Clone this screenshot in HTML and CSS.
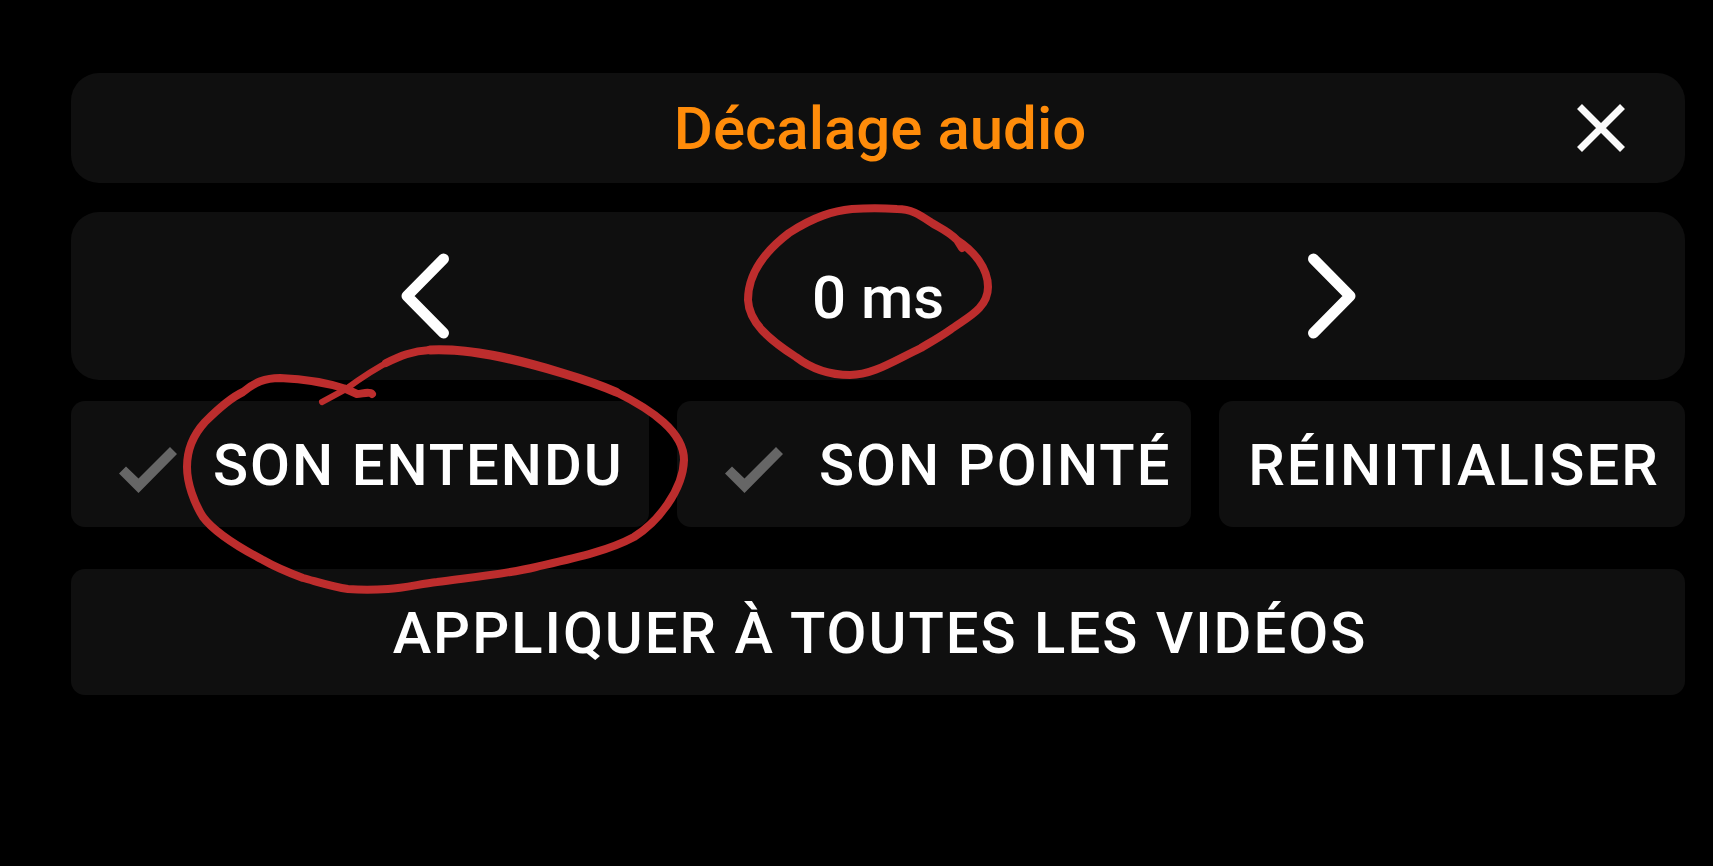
FILE: index.html
```html
<!DOCTYPE html>
<html lang="fr">
<head>
<meta charset="utf-8">
<meta name="viewport" content="width=device-width, initial-scale=1">
<title>Décalage audio</title>
<link rel="stylesheet" href="styles.css">
</head>
<body>
<main class="dialog">
  <header class="panel header">
    <h1 class="title">Décalage audio</h1>
    <button class="icon-button close" type="button" aria-label="Fermer">
      <svg width="48" height="48" viewBox="0 0 48 48" aria-hidden="true"><path d="M2.500 2.500L45.500 45.500M45.500 2.500L2.500 45.500" stroke="#fafafa" stroke-width="7" fill="none"/></svg>
    </button>
  </header>
  <section class="panel stepper">
    <button class="icon-button" type="button" aria-label="Diminuer">
      <svg width="48" height="86" viewBox="0 0 48 86" aria-hidden="true"><path d="M42.500 6L6 43L42.500 80" class="chevron"/></svg>
    </button>
    <output class="value">0 ms</output>
    <button class="icon-button" type="button" aria-label="Augmenter">
      <svg width="48" height="86" viewBox="0 0 48 86" aria-hidden="true"><path d="M5.500 6L42 43L5.500 80" class="chevron"/></svg>
    </button>
  </section>
  <div class="actions">
    <button class="action with-check" type="button">
      <svg class="check" width="58" height="46" viewBox="0 0 58 46" aria-hidden="true"><path d="M7 19.500L0 26.500L19.500 46L58 7L51 0L19.500 31.500Z"/></svg>
      <span>SON ENTENDU</span>
    </button>
    <button class="action with-check" type="button">
      <svg class="check" width="58" height="46" viewBox="0 0 58 46" aria-hidden="true"><path d="M7 19.500L0 26.500L19.500 46L58 7L51 0L19.500 31.500Z"/></svg>
      <span>SON POINTÉ</span>
    </button>
    <button class="action" type="button">RÉINITIALISER</button>
  </div>
  <button class="action apply" type="button">APPLIQUER À TOUTES LES VIDÉOS</button>
</main>
<svg class="ink" viewBox="0 0 1713 866" aria-hidden="true">
  <path d="M962 248L957 240C948 231 940 228 932 223C920 215 912 209 897 209C882 208 868 208 852 209C834 211 815 216 789 233C768 249 748 272 748 300C749 322 768 339 796 357C813 370 832 375 850 375C872 375 890 363 921 348C931 342 940 337 950 330C966 318 988 309 988 287C988 268 974 251 957 240"/>
  <path class="thin" d="M322 402L346 389C365 375 378 367 392 360"/>
  <path d="M386 363C400 356 412 351 430 350"/>
  <path class="thick" d="M430 350C470 348 516 359 562 373C582 379 600 385 616 392"/>
  <path d="M616 392C652 410 684 432 684 460C683 490 658 522 634 537C608 551 575 558 536 567C502 575 465 578 437 582C420 584 405 588 388 589C374 590 360 590 348 589C333 587 318 582 303 578C287 572 275 567 263 560C240 548 215 533 203 517C194 503 187 483 187 467C187 448 194 434 205 422C216 411 230 398 243 392C255 382 265 378 280 378C305 379 325 382 346 389"/>
  <path d="M346 389L357 394C362 394 369 391 372 394"/>
</svg>
</body>
</html>
```
FILE: styles.css
```css
* {
  box-sizing: border-box;
}

body {
  margin: 0;
  min-height: 100vh;
  position: relative;
  background: #000;
  color: #fff;
  font-family: Roboto, "Noto Sans", sans-serif;
  font-weight: 500;
}

.dialog {
  display: flex;
  flex-direction: column;
  padding: 73px 28px 0 71px;
}

.panel {
  background: #0f0f0f;
  border-radius: 28px;
}

.header {
  display: grid;
  grid-template-columns: 1fr auto 1fr;
  align-items: center;
  padding: 19px 60px 19px 64px;
}

.title {
  grid-column: 2;
  margin: 0;
  padding-top: 2px;
  color: #ff8c0a;
  font-size: 60px;
  font-weight: 500;
  line-height: 70px;
}

.icon-button {
  display: flex;
  justify-self: center;
  padding: 0;
  border: 0;
  background: none;
}

.close {
  justify-self: end;
}

.chevron {
  fill: none;
  stroke: #fff;
  stroke-width: 11;
  stroke-linecap: round;
  stroke-linejoin: round;
}

.stepper {
  display: grid;
  grid-template-columns: 1fr 200px 1fr;
  align-items: center;
  margin-top: 29px;
  padding: 41px 0;
}

.value {
  padding-top: 4px;
  font-size: 60px;
  line-height: 70px;
  text-align: center;
  white-space: nowrap;
}

.actions {
  display: grid;
  grid-template-columns: 578fr 514fr 466fr;
  gap: 28px;
  margin: 21px 0 42px;
}

.action {
  display: flex;
  align-items: center;
  justify-content: center;
  padding: 28px 0 26px 4px;
  border: 0;
  border-radius: 14px;
  background: #0f0f0f;
  color: #fff;
  font: inherit;
  font-size: 58px;
  line-height: 72px;
  letter-spacing: 2px;
  white-space: nowrap;
}

.with-check {
  justify-content: flex-start;
  gap: 36px;
  padding-left: 48px;
}

.check {
  flex: none;
  margin-top: 10px;
  fill: #666;
}

.ink {
  position: absolute;
  top: 0;
  left: 0;
  width: 100%;
  pointer-events: none;
  fill: none;
  stroke: #bd2d2d;
  stroke-width: 8;
  stroke-linecap: round;
  stroke-linejoin: round;
}

.thin {
  stroke-width: 6;
}

.thick {
  stroke-width: 9;
}
```
